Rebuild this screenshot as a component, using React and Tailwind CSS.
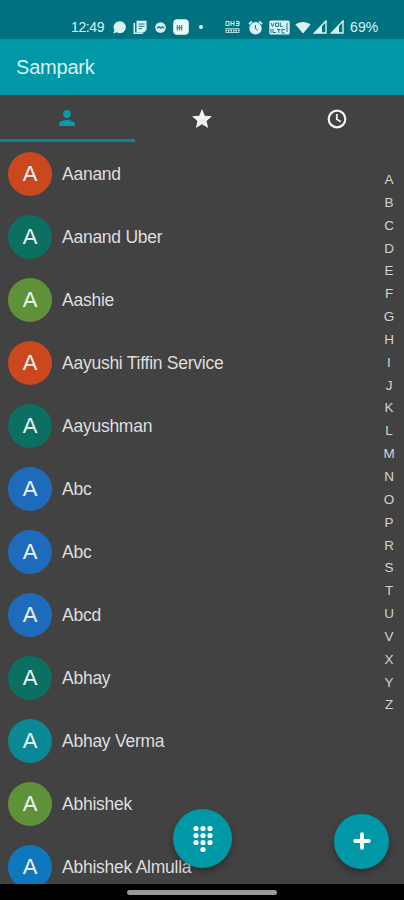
import { MdPerson, MdStar } from 'react-icons/md'

const CONTACTS = [
  { name: 'Aanand', color: 'bg-[#cb481f]' },
  { name: 'Aanand Uber', color: 'bg-[#0b6f61]' },
  { name: 'Aashie', color: 'bg-[#5f9138]' },
  { name: 'Aayushi Tiffin Service', color: 'bg-[#cb481f]' },
  { name: 'Aayushman', color: 'bg-[#0b6f61]' },
  { name: 'Abc', color: 'bg-[#1f6bbb]' },
  { name: 'Abc', color: 'bg-[#1f6bbb]' },
  { name: 'Abcd', color: 'bg-[#1f6bbb]' },
  { name: 'Abhay', color: 'bg-[#0b6f61]' },
  { name: 'Abhay Verma', color: 'bg-[#0b8896]' },
  { name: 'Abhishek', color: 'bg-[#5f9138]' },
  { name: 'Abhishek Almulla', color: 'bg-[#0f77bb]' },
]

const LETTERS = 'ABCDEFGHIJKLMNOPRSTUVXYZ'.split('')

function Signal({ className }) {
  return (
    <svg className={className} width="14" height="14" viewBox="0 0 14 14">
      <path d="M13 1v12H1.5z" fill="none" stroke="currentColor" strokeWidth="1.4" />
      <path d="M9 5v8H1.5z" fill="currentColor" />
    </svg>
  )
}

function StatusBar() {
  return (
    <div className="flex h-[39px] shrink-0 items-center bg-[#00727f] pt-[15px] pl-[71px] text-[#d9f3f4]">
      <span className="w-[42px] text-[14px] tracking-[-0.4px]">12:49</span>
      {/* chat */}
      <svg width="13" height="13" viewBox="0 0 13 13" fill="currentColor">
        <path d="M6.9.3a5.9 5.9 0 1 1-2.9 11L.4 12.500l1-3.400A5.900 5.900 0 0 1 6.900.3z" />
      </svg>
      {/* news */}
      <svg className="ml-[7px]" width="14" height="14" viewBox="0 0 14 14">
        <path d="M3.5 .8h10V10L11 12.5H3.5z" fill="currentColor" />
        <path d="M1.3 3v10.3h8.500" fill="none" stroke="currentColor" strokeWidth="1.5" />
        <path d="M5.5 4h6M5.5 6.3h6M5.5 8.600h3.500" stroke="#00727f" strokeWidth=".9" />
      </svg>
      <svg className="ml-2" width="11" height="11" viewBox="0 0 11 11">
        <circle cx="5.5" cy="5.5" r="5.3" fill="currentColor" />
        <path d="M2 6.3l1.8-1.6 1.7 1.5 1.7-1.5L9 6.3" fill="none" stroke="#00727f" strokeWidth="1.2" />
      </svg>
      <svg className="ml-[7px]" width="16" height="16" viewBox="0 0 16 16">
        <rect x=".2" y=".2" width="15.6" height="15.6" rx="4" fill="#eefafa" />
        <path d="M4.3 6v5.5M6.500 6v5.500M8.700 6v5.500M3.500 8.800h6" stroke="#357f86" strokeWidth="1.1" />
      </svg>
      <span className="ml-[10px] size-1 rounded-full bg-[#d9f3f4]" />
      {/* network speed */}
      <svg className="ml-[22px]" width="15" height="14" viewBox="0 0 15 14" fill="none" stroke="currentColor">
        <path d="M1 1.5h3v4H1zM6 1v5M6 3.5h3M9 1v5M11 1.5h3v4h-3M11 3.5h3" strokeWidth="1" />
        <path d="M.5 8.7h14M.5 12.5h14" strokeWidth=".8" />
        <path d="M.5 10.6h14" strokeWidth="2" strokeDasharray="1.5 1" />
      </svg>
      {/* alarm */}
      <svg className="ml-2" width="15" height="15" viewBox="0 0 15 15">
        <circle cx="7.5" cy="8.3" r="6.2" fill="currentColor" />
        <path d="M.9 4.1l3-2.6M14.1 4.1l-3-2.6" stroke="currentColor" strokeWidth="1.8" />
        <path d="M7.4 5v3.6l2.2 1.5" fill="none" stroke="#00727f" strokeWidth="1" />
      </svg>
      {/* VoLTE */}
      <svg className="ml-[6px]" width="21" height="15" viewBox="0 0 21 15">
        <rect x=".3" y=".5" width="20.4" height="14" rx="1.5" fill="currentColor" />
        <path d="M2 3l1.5 3.5L5 3M6.5 3h3v3.5h-3zM11.3 2.5v4h2.5M2 13V9M4 9v3.5h3M8 9.5h3.5M9.8 9.5V13M16 9.5h-3V13h3M18 3v9" fill="none" stroke="#00727f" strokeWidth=".9" />
      </svg>
      {/* wifi */}
      <svg className="ml-[5px]" width="16" height="13" viewBox="0 0 16 13" fill="currentColor">
        <path d="M8 12.6L.4 3.5C4.4 0 11.6 0 15.6 3.5z" />
      </svg>
      <Signal className="ml-[2px]" />
      <Signal className="ml-[3px]" />
      <span className="ml-[6px] text-[14px] tracking-[0.1px]">69%</span>
    </div>
  )
}

function Tabs() {
  return (
    <div className="grid h-[47px] shrink-0 grid-cols-3 text-[#f2f2f2]">
      <div className="flex items-center justify-center border-b-[3px] border-[#088591] pt-[2px] text-[#0a98a8]">
        <MdPerson size={24} />
      </div>
      <div className="flex items-center justify-center">
        <MdStar size={24} />
      </div>
      <div className="flex items-center justify-center">
        <svg width="20" height="20" viewBox="0 0 20 20" fill="none" stroke="currentColor">
          <circle cx="10" cy="10" r="8.3" strokeWidth="2.2" />
          <path d="M9.8 5v5.300l4 2.400" strokeWidth="1.800" />
        </svg>
      </div>
    </div>
  )
}

function ContactRow({ name, color }) {
  return (
    <li className="flex h-[63px] items-center gap-[10px] pl-2">
      <div className={`flex size-11 items-center justify-center rounded-full text-[22px] text-[#edf5f3] ${color}`}>
        A
      </div>
      <span className="pt-px text-[17.5px] tracking-[-0.25px] whitespace-nowrap text-[#dedede]">{name}</span>
    </li>
  )
}

export default function App() {
  return (
    <div className="relative flex h-[900px] w-[404px] flex-col overflow-hidden bg-[#424242] font-['Liberation_Sans',sans-serif]">
      <StatusBar />
      <header className="flex h-14 shrink-0 items-center bg-[#0097a7] pl-4">
        <h1 className="text-[20px] tracking-[-0.2px] text-[#d5f4f4]">Sampark</h1>
      </header>
      <Tabs />

      <main className="flex h-[742px] shrink-0 justify-between overflow-hidden">
        <ul>
          {CONTACTS.map((c, i) => (
            <ContactRow key={i} {...c} />
          ))}
        </ul>
        <ol className="mt-[27px] w-[30px] text-center text-[13.5px] text-[#d2d2d2]">
          {LETTERS.map(l => (
            <li key={l} className="h-[22.85px] leading-[22.85px]">{l}</li>
          ))}
        </ol>
      </main>

      {/* Floating buttons */}
      <button className="absolute top-[809px] left-[173px] flex size-[59px] items-center justify-center rounded-full bg-[#0097a7] shadow-[0_4px_7px_rgba(0,0,0,0.3)]">
        <svg width="20" height="28" viewBox="0 0 20 28" fill="white">
          {[3, 10, 17].map(x => [3.5, 10.5, 17.5].map(y => <circle key={`${x}-${y}`} cx={x} cy={y} r="2.6" />))}
          <circle cx="10" cy="24.5" r="2.6" />
        </svg>
      </button>
      <button className="absolute top-[814px] left-[334px] flex size-[55px] items-center justify-center rounded-full bg-[#0097a7] pb-px shadow-[0_4px_7px_rgba(0,0,0,0.3)]">
        <svg width="18" height="18" viewBox="0 0 18 18" stroke="white" strokeWidth="3.8" strokeLinecap="round">
          <path d="M9 2.2v13.6M2.2 9h13.6" />
        </svg>
      </button>

      {/* Gesture bar */}
      <div className="flex flex-1 justify-center bg-black pt-[6px]">
        <div className="h-[5px] w-[150px] rounded-full bg-[#999]" />
      </div>
    </div>
  )
}
